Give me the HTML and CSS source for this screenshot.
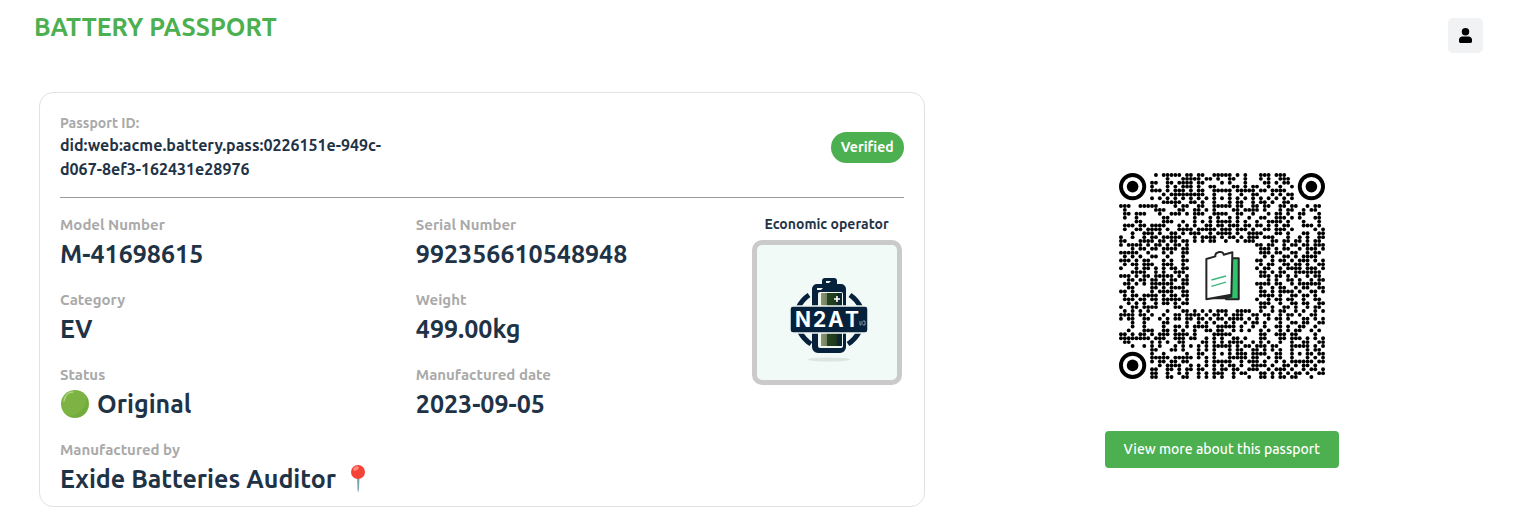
FILE: index.html
```html
<!DOCTYPE html>
<html lang="en">
<head>
<meta charset="utf-8">
<title>Battery Passport</title>
<link rel="stylesheet" href="styles.css">
</head>
<body>
<header class="header">
  <h1 class="title">BATTERY PASSPORT</h1>
  <button class="user-button" type="button" aria-label="Account">
    <svg class="user-icon" viewBox="0 0 14 16" aria-hidden="true"><circle cx="7" cy="4" r="4"/><path d="M4 9h6a3.700 3.700 0 0 1 4 4v1.500a1.500 1.500 0 0 1-1.500 1.500h-11A1.500 1.500 0 0 1 0 14.500V13a3.700 3.700 0 0 1 4-4z"/></svg>
  </button>
</header>
<main class="content">
  <section class="card">
    <div class="card-head">
      <div class="passport">
        <div class="passport-label">Passport ID:</div>
        <div class="passport-id">did:web:acme.battery.pass:0226151e-949c-<wbr>d067-8ef3-162431e28976</div>
      </div>
      <span class="badge">Verified</span>
    </div>
    <div class="details">
      <dl class="fields">
        <div class="field"><dt>Model Number</dt><dd>M-41698615</dd></div>
        <div class="field"><dt>Category</dt><dd>EV</dd></div>
        <div class="field"><dt>Status</dt><dd class="with-icon">
          <svg class="status-icon" viewBox="0 0 30 30" aria-hidden="true"><circle cx="15" cy="15" r="14" fill="#7cb342"/><path d="M26 7a14 14 0 0 1-20 19c11 3 21-7 20-19z" fill="#689f38" opacity=".35"/><path d="M4 12C5 6 9 3 13 3" fill="none" stroke="#aed581" stroke-width="1.500" stroke-linecap="round"/></svg>
          Original</dd></div>
        <div class="field"><dt>Manufactured by</dt><dd class="with-icon pinned">Exide Batteries Auditor
          <svg class="pin-icon" viewBox="0 0 16 30" aria-hidden="true"><path d="M7 12h2.500l-.5 13-.6 3H8l-.5-3z" fill="#78a3ad"/><circle cx="8" cy="8" r="7" fill="#f44336"/><ellipse cx="6" cy="4.500" rx="3" ry="1.800" fill="#ff8a80" transform="rotate(-25 6 4.500)"/></svg></dd></div>
      </dl>
      <dl class="fields">
        <div class="field"><dt>Serial Number</dt><dd>992356610548948</dd></div>
        <div class="field"><dt>Weight</dt><dd>499.00kg</dd></div>
        <div class="field"><dt>Manufactured date</dt><dd>2023-09-05</dd></div>
      </dl>
      <div class="operator">
        <div class="operator-label">Economic operator</div>
        <div class="operator-logo">
          <svg class="logo" viewBox="0 0 140 135" role="img" aria-label="N2AT">
            <defs><linearGradient id="cell"><stop offset="0" stop-color="#8b9877"/><stop offset=".28" stop-color="#71805e"/><stop offset=".3" stop-color="#24451f"/><stop offset=".75" stop-color="#1d371c"/><stop offset=".78" stop-color="#0c2533"/><stop offset="1" stop-color="#0c2533"/></linearGradient></defs>
            <ellipse cx="72" cy="114.500" rx="21" ry="2" fill="#dce5e0"/>
            <path d="M52 50a32 32 0 0 0-11 13M93 50a32 32 0 0 1 11 13M43 87a32 32 0 0 0 11 12M102 87a32 32 0 0 1-11 12" fill="none" stroke="#05213b" stroke-width="5"/>
            <path d="M55 44a5 5 0 0 1 5-5h5v-3a3 3 0 0 1 3-3h9a3 3 0 0 1 3 3v3h4a5 5 0 0 1 5 5v58a6 6 0 0 1-6 6H61a6 6 0 0 1-6-6z" fill="#05213b"/>
            <path d="M69 38v-2h5l-2 2M60 45v-2h6l-2 2" fill="#eef4ee"/>
            <rect x="61" y="47" width="25" height="56" rx="2" fill="#eff7ef"/>
            <rect x="64" y="48" width="21" height="53" fill="url(#cell)"/>
            <path d="M77 54h6M80 51v6" stroke="#fff" stroke-width="1.600"/>
            <rect x="33" y="61" width="78" height="27" rx="3" fill="#05213b" stroke="#eff8f5" stroke-width="1.500"/>
            <text class="logo-text" x="38 56 71 88" y="82">N2AT</text>
            <path d="M103 76v4h1M105 76v4M106 76h2v4h-2" fill="none" stroke="#b9c6cf" stroke-width=".7"/>
          </svg>
        </div>
      </div>
    </div>
  </section>
  <aside class="share">
    <svg class="qr" viewBox="0 0 53 53" role="img" aria-label="Passport QR code">
      <g id="modules"></g>
      <g fill="none" stroke="#000"><circle cx="3.500" cy="3.500" r="3"/><circle cx="49.500" cy="3.500" r="3"/><circle cx="3.500" cy="49.500" r="3"/></g>
      <circle cx="3.500" cy="3.500" r="1.500"/><circle cx="49.500" cy="3.500" r="1.500"/><circle cx="3.500" cy="49.500" r="1.500"/>
      <g transform="translate(15.700 15.950) scale(.0858)" stroke-linejoin="round">
        <path d="M154 70h22v123h-38z" fill="#2fc36c" stroke="#252525" stroke-width="6"/>
        <path d="M79 72l27-8c-2-14 24-19 25-5l26-7-3 127-75 14z" fill="#fff" stroke="#252525" stroke-width="6"/>
        <path d="M79 193l77-14 1 8-23 6z" fill="#252525"/>
        <path d="M94 135l44-12M94 154l44-13" stroke="#3fb67e" stroke-width="4"/>
      </g>
    </svg>
    <button class="more-button" type="button">View more about this passport</button>
  </aside>
</main>
<script src="qr.js"></script>
</body>
</html>
```
FILE: styles.css
```css
* { box-sizing: border-box; }
body { margin: 0; background: #fff; color: #1f3347; font-family: Ubuntu, "Noto Sans", sans-serif; font-weight: 600; }
button { border: 0; font-family: inherit; cursor: pointer; }
.header { display: flex; justify-content: space-between; align-items: flex-start; padding: 12px 41px 0 34px; height: 92px; }
.title { margin: 0; color: #4caf50; font-size: 25px; line-height: 30px; font-weight: 600; }
.user-button { display: flex; align-items: center; justify-content: center; width: 35px; height: 35px; margin-top: 6px; padding: 0; border-radius: 5px; background: #f1f2f4; }
.user-icon { width: 13px; height: 15px; }
.content { display: grid; grid-template-columns: 149fr 100fr; padding: 0 5px 23px 39px; }
.card { border: 1px solid #e2e2e2; border-radius: 14px; padding: 20px 20px 9px; }
.card-head { display: flex; align-items: center; justify-content: space-between; padding-bottom: 16px; border-bottom: 1px solid #999; }
.passport { width: 42%; }
.passport-label { color: #a9a9a9; font-size: 14px; line-height: 20px; }
.passport-id { font-size: 16px; line-height: 24px; }
.badge { padding: 0 10px; border-radius: 16px; background: #4caf50; color: #fff; font-size: 14px; line-height: 31px; }
.details { display: grid; grid-template-columns: 356fr 334fr 154px; padding-top: 16px; }
.fields { display: flex; flex-direction: column; gap: 17px; margin: 0; }
dt { color: #a9a9a9; font-size: 15px; line-height: 22px; }
dd { margin: 0; font-size: 25px; line-height: 36px; white-space: nowrap; }
.with-icon { display: flex; align-items: center; gap: 7px; }
.pinned { gap: 14px; }
.status-icon { width: 30px; height: 30px; }
.pin-icon { width: 16px; height: 30px; }
.operator { display: flex; flex-direction: column; align-items: center; }
.operator-label { font-size: 14px; line-height: 20px; }
.operator-logo { width: 150px; margin-top: 6px; border: 5px solid #cacaca; border-radius: 10px; background: #f1faf6; }
.logo { display: block; width: 100%; }
.logo-text { fill: #fff; font-family: Inter, "Open Sans", sans-serif; font-size: 21px; font-weight: 700; }
.share { display: flex; flex-direction: column; align-items: center; padding-top: 81px; }
.qr { width: 206px; height: 206px; }
.more-button { width: 234px; height: 37px; margin-top: 52px; padding: 0 0 2px; border-radius: 4px; background: #4caf50; color: #fff; font-size: 14px; font-weight: 500; }
```
FILE: qr.js
```js
const left = [
".........#.#####.##.##..###","............#...#####.##.#.","........##..##.####.##....#","........#...#.#.###.#..##..",
"........###.#.###.#.##..###","...........#.#########..#..","........#.#.#.#.#.#.#.#.#.#","...........#####..##.#..#..",
"###..#####....#.##..##..###",".#.......###...##..##.#.#..",".##.###...#..###.#.###..###",".#..#......##......#...#.#.",
"....##.....###..#..#.#.#.##",".###.##.####...#.#.#..##.##",".#..##.####.#..####.#####.#","...#..###.#..##.#.###..#.##",
"#..#..#.##.#####...#.####.#","##...####.##.##.##.#.#.##..",
"#.####.#.##.#.##.#","...#.##.##.####.##","#####..#...#.#..##",".#.#.#..##..#...#.","###.#.##...#.#..##",".#.##.###..###..#.",
"#...#.##.#.#.##.##","...####..#.#..###.","###.#.##.#####.#.#","..##.##.##.#.##.##",".##.#.#.######..##","..##....##.#.####.",
"##.#....#.####..##",".#.##.####.#.##.##",".###.##.##.#####.#","..#.#.#..#.##.#.##","#..##.####....##..",
".#.#.#.#....#...##.#.#.#.##","####.##.#..#..##.####.#.##.","#.##..##..#.#.##.##.##.#.##","...#..#....##....#..#.#.#..",
"...#..#....#..##.#.####..##","..#...###..##.#.#..#..##.##","##.#.##.#.###.####.#....###","########.###..###.##..#.#.#",
".##.....#.#.#..##....##.#.#","...#..#.#.#...#.#.#.#.#.###","........##...##.#...#.#.#..","........#..#.....#..##..#.#",
"........#####.#####.#.#.#..","........#.##.##.##....#.###","..........#.####..#.#.#.#.#","........##..##.#.##.##..#.#",
"........##..#..#.#..#.#.###","........##..##..##..#.#.#.#"];
const right = [
"##.#.#...###.###..........",".##..#...#.#..###.........",".#...#....##.#.##.........","..##.#.##..#..#..#........",
"##.#####.##.####..........",".#..#..##...#.#.##........",".#.#.#.#.#.#.#.#.#........",".#.##..#.##.#..##.........",
"##.##..##.##..##.##..#.##.","..##.####.#...#.##..#.##..","#..##..#...#.##.#..##...#.",".#.#..#..##..###.#.#...##.",
"##.#.#..#..####.#...#...#.",".###.##.##.#.#.##...###.#.","##.###.#..##.###.#.....#.#","##.#..####...##.#...##..##",
".##.#.###.###...#..#.#..##","#..#.###....##.##.##.#.##.",
"##.##..#.##.##.###",".###.#.##..#.###.#",".###.##..##..#.##.","..#.#..##.#.####..","##..#.##.#.###.#.#",".#.##..##.##.#..##",
"#.##..#.####.###.#",".##.#.##..#######.",".###.##.#.#..#.##.","...#.#..##.#..#.##","####.##..#.######.",".#..#.##..#.##..##",
".##.#.####.#..##.#",".####.#..##.##.#..","#..#.##.##..#..##.",".###..#..##.##..##",".##.#..##.#..#.##.",
"#..####..#..#.##..#.#..#.#","#.###..##.##..#.##.#..##..",".####.#.#..#.##.#...##.#.#","#.#..#.##.#...#..##.##..##",
"###.#..#..#..##.#..##..#..","..#.#.#..#.#..#.#.##..#.#.","##.......##..###.##....#..","..##.#...##...##.###.#.#.#",
".####..#.#.#..#..#..##..##","##.#.##.###.##...#####.#.#",".#.##..##.#.#.#..#...#.##.",".#.###.####..##..#.#.##.##",
".#####.##..#.##..#...#.#.#","##..#.###.#..#.#.######.##",".##.#..####.#..##.#.##.#..","#.##..###..#.###.#..#.##.#",
"..#.##...##.#.#.#.##.#..##","..#...#..##.#.##.##...#..."];
const group = document.getElementById("modules");
left.forEach((row, y) => {
  const line = row.padEnd(53 - right[y].length, ".") + right[y];
  [...line].forEach((mark, x) => {
    if (mark !== "#") return;
    const dot = document.createElementNS("http://www.w3.org/2000/svg", "circle");
    dot.setAttribute("cx", x + 0.5);
    dot.setAttribute("cy", y + 0.5);
    dot.setAttribute("r", 0.5);
    group.append(dot);
  });
});
```
